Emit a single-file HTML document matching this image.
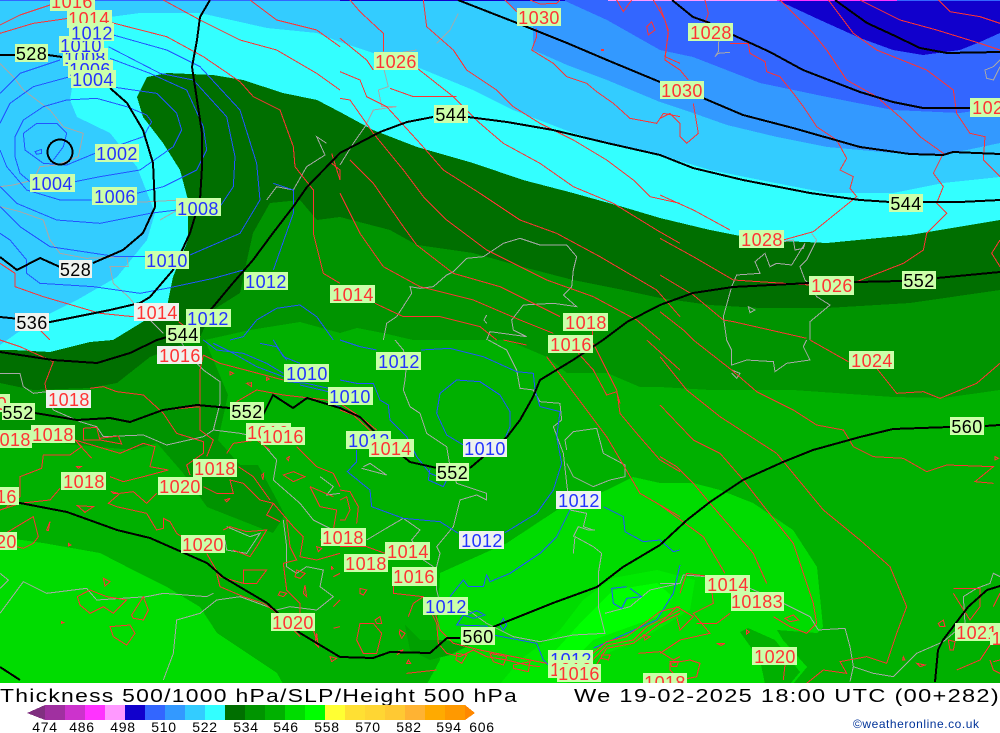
<!DOCTYPE html>
<html><head><meta charset="utf-8"><title>Thickness 500/1000 hPa</title>
<style>
html,body{margin:0;padding:0;background:#fff;width:1000px;height:733px;overflow:hidden}
svg{display:block;font-family:"Liberation Sans",sans-serif}
.l text{font-size:18px;letter-spacing:.4px;text-anchor:middle;shape-rendering:auto}
.r text{fill:#ff3333}.b text{fill:#2233ff}.k text{fill:#000}
.l rect{fill:#ccffaa}
.w rect{fill:#eef2ee}
.red path{fill:none;stroke:#ff3333;stroke-width:1;vector-effect:non-scaling-stroke}
.blu path{fill:none;stroke:#2255ff;stroke-width:1;vector-effect:non-scaling-stroke}
.gry path{fill:none;stroke:#a8a8a8;stroke-width:1;vector-effect:non-scaling-stroke}
.blk path,.blk circle{fill:none;stroke:#000;stroke-width:2;vector-effect:non-scaling-stroke}
</style></head><body>
<svg width="1000" height="733" viewBox="0 0 1000 733" xmlns="http://www.w3.org/2000/svg">
<defs><clipPath id="m"><rect x="0" y="0" width="1000" height="683"/></clipPath></defs>
<g clip-path="url(#m)">
<g shape-rendering="crispEdges">
<rect width="1000" height="684" fill="#1100cc"/>
<path fill="#3366ff" d="M0,0 L777,0 820,20 860,38 893,50 923,55 960,50 980,42 1000,33 V684 H0Z"/>
<path fill="#3399ff" d="M563,0 607,20 660,50 693,57 760,83 827,97 893,110 960,113 1000,107 V684 H0 V0Z"/>
<path fill="#33ccff" d="M0,0 H503 L533,23 533,50 567,65 607,80 660,102 693,113 727,125 777,137 827,147 893,153 943,155 1000,143 V684 H0Z"/>
<path fill="#33ffff" d="M110,17 140,13 200,13 267,28 317,33 340,42 373,53 417,67 473,90 513,110 573,133 623,147 660,155 710,170 760,180 827,193 893,193 943,183 1000,177 V684 H0 V345 L17,333 43,317 77,300 117,277 147,240 155,213 137,167 110,133 77,117 70,100 75,70 90,40Z"/>
<path fill="#006f00" d="M0,350 L13,350 50,352 90,342 113,340 167,307 173,277 188,240 188,200 180,170 163,143 143,117 137,97 147,77 167,73 213,75 243,80 283,93 317,100 340,112 373,130 417,147 473,163 523,180 573,193 623,207 660,218 710,230 760,240 827,243 910,235 1000,220 V684 H0Z"/>
<path fill="#009400" d="M0,383 L33,390 90,388 117,383 150,357 200,337 213,310 240,293 247,260 253,233 270,203 300,200 317,220 340,217 390,230 417,245 473,253 523,267 573,280 623,290 660,298 710,305 760,308 827,308 910,303 1000,290 V684 H0Z"/>
<path fill="#00b000" d="M0,445 L57,443 133,450 157,443 183,473 207,507 273,533 285,515 258,465 240,465 218,440 228,395 205,340 250,330 300,322 340,333 357,328 383,333 413,340 507,340 547,357 567,373 607,373 640,387 660,387 710,390 793,390 893,397 943,398 1000,390 V684 H0Z"/>
<path fill="#00dc00" d="M0,537 L43,543 100,553 133,570 167,587 200,607 217,633 277,673 283,684 H0Z"/>
<path fill="#00dc00" d="M427,684 L440,660 437,633 440,573 507,543 557,510 607,490 633,477 660,483 693,483 720,490 753,503 793,530 817,567 823,627 817,633 777,630 783,640 807,667 793,684Z"/>
<path fill="#00b000" d="M740,632 L748,628 775,640 800,672 790,684 765,684 760,660Z"/>
<path fill="#00ea00" d="M520,660 L560,630 583,600 613,578 657,570 695,580 690,610 640,640 590,660 565,684 500,684Z"/>
<path fill="#00ff00" d="M583,620 L613,590 657,583 673,597 657,617 593,640 573,660 547,660Z"/>
<path fill="#00a000" d="M405,625 L420,640 445,640 470,645 450,655 430,660 410,650Z"/>
<rect x="0" y="0" width="340" height="1" fill="#3366ff"/>
<rect x="340" y="0" width="225" height="1" fill="#1100cc"/>
<rect x="608" y="0" width="170" height="1" fill="#ff99ff"/>
<rect x="777" y="0" width="120" height="1" fill="#ff33ff"/>
<rect x="897" y="0" width="103" height="1" fill="#3366ff"/>
</g>
<g shape-rendering="crispEdges">
<g class="gry" transform="scale(.33333)">
<path d="M0,190 40,230 70,270 110,300 150,330 190,380 250,400 235,470 170,495 120,500 100,540 40,555 0,560"/>
<path d="M0,620 60,635 130,660 150,720 180,760 260,775 380,770 385,800 330,800 340,850 385,890 410,920 450,960 490,1000"/>
<path d="M340,610 450,605 540,600 550,620 480,660"/>
<path d="M800,600 830,560 880,570 920,500 975,465 950,410 980,430"/>
</g>
<g class="gry" transform="translate(340,0) scale(.33333)">
<path d="M290,130 330,90 355,40"/>
<path d="M230,150 170,160 130,200 145,260 115,270 125,320 170,320 100,330 75,380 40,430 0,495"/>
<path d="M130,1020 140,970 170,950 215,880 210,860 240,865 280,860 320,825 340,815 380,775 430,770 490,730 540,715 600,735 680,735 710,770 700,810 695,860 670,885 710,920 640,910 550,915 515,960 520,990 560,1010 450,995 440,1020"/>
<path d="M440,945 432,960 440,970"/>
</g>
<g class="gry" transform="translate(660,0) scale(.33333)">
<path d="M177,110 175,155 165,170 175,160 210,157"/>
<path d="M1020,180 1000,200 975,210 980,235 1000,240 1020,200"/>
<path d="M455,700 470,720 440,780 420,800 435,840 450,855 470,890 510,915 450,965 450,1020"/>
<path d="M370,725 400,720 405,750 430,745 435,730 395,795 350,790 330,800 315,760 285,785 300,820 230,825 215,860 190,950 200,1020"/>
<path d="M265,920 285,930 270,938Z"/>
</g>
<g class="gry" transform="translate(0,340) scale(.33333)">
<path d="M0,100 60,100 70,140 100,160 140,155 160,210 240,245 290,260 310,290 430,285 500,315 610,290 640,270 660,190 660,125 610,90 570,50 540,0"/>
<path d="M640,270 720,280 770,290 830,360 820,420 900,490 940,540 1000,570"/>
<path d="M850,540 860,620 860,680 890,700 920,680 970,690 960,740 1000,770 950,810 870,800 830,810 720,770 650,780 600,820 530,840 520,940 490,1020"/>
<path d="M0,700 25,720 0,745 M0,820 70,725 140,760 260,745 290,780 440,770 490,760 620,770 640,760"/>
<path d="M680,560 750,590 780,580 740,640 680,630 675,600"/>
<path d="M960,410 1000,440 980,465 1020,460"/>
</g>
<g class="gry" transform="translate(340,340) scale(.33333)">
<path d="M165,0 190,30 200,70 195,120 190,150 210,200 240,220 260,280 320,320 330,380 350,430 440,460 440,480 410,465 360,480 340,560 290,620 300,640 285,700 290,750 300,790 370,800 440,850 520,890 600,905 700,885 795,880 775,800 775,700 785,640 760,620 705,590 700,640"/>
<path d="M445,0 500,30 530,90 540,145 580,150 600,185 660,190 665,240 640,260 670,340 680,430 690,510 740,520 730,560 760,570"/>
<path d="M680,330 675,300 700,275 770,265 790,340 855,375 855,410 810,420 760,440 700,410 680,370"/>
<path d="M70,380 90,370 140,405 65,385"/>
<path d="M80,600 130,570 190,535 240,570 215,600 250,660 280,680"/>
<path d="M700,590 715,560 745,570 765,570"/>
<path d="M795,820 870,800 930,750 1020,730"/>
</g>
<g class="gry" transform="translate(660,340) scale(.33333)">
<path d="M200,0 215,30 215,75 260,60 340,65 345,95 380,70 450,60 430,20 440,0"/>
<path d="M215,90 240,100 230,115 215,100"/>
<path d="M0,730 60,730 70,705 140,710 150,730 270,745 370,790 450,830 475,870 555,865 570,920 580,980 570,1025"/>
<path d="M580,980 640,1000 700,1010 770,940 850,905 915,850 910,770 950,745 990,730 1000,700 1020,710"/>
</g>
<g class="blu" transform="scale(.33333)">
<path d="M105,455 125,448 125,460 110,463Z"/>
<path d="M285,460 200,495 130,490 75,450 70,400 110,370 170,370 200,400 190,440 160,480"/>
<path d="M90,545 60,520 45,470 45,410 70,360 130,320 200,300 290,295 380,320 440,345 455,365 430,410 330,445"/>
<path d="M225,545 300,530 420,510 520,440 545,390 530,340 470,280 400,270 345,262"/>
<path d="M275,600 180,600 80,570 20,500 0,450 M0,370 30,310 100,260 210,230"/>
<path d="M410,580 490,560 590,510 620,450 610,380 560,270 450,220 330,175 M0,280 60,220 180,180"/>
<path d="M660,620 700,560 705,470 680,350 580,240 480,220 325,140"/>
<path d="M570,765 720,700 780,600 770,490 720,330 600,200 500,150 340,105"/>
<path d="M530,630 450,640 300,670 170,660 50,610 0,560"/>
<path d="M435,770 350,770 150,740 60,680 0,620"/>
<path d="M730,810 640,835 500,865 420,880 280,860 120,850 80,820 80,780 30,720 0,700"/>
<path d="M820,810 880,640 880,570 820,550"/>
<path d="M690,1020 730,1010 770,960 830,925 900,915 950,950 1000,1020"/>
</g>
<g class="blu" transform="translate(0,340) scale(.33333)">
<path d="M610,0 650,30 730,40 800,70 850,100 M780,10 830,20 860,60 M820,0 850,50 900,70 M640,10 700,40 770,80 850,110"/>
<path d="M985,145 920,130 860,125 M985,155 900,135"/>
<path d="M1020,200 900,170"/>
</g>
<g class="blu" transform="translate(340,340) scale(.33333)">
<path d="M0,0 60,20 110,30 M243,30 330,25 430,50 530,95 580,100 585,150 600,200 660,215 650,290 665,370 640,450 590,520 495,578"/>
<path d="M370,315 320,285 290,220 300,160 350,120 420,125 480,165 510,215 510,260 495,295"/>
<path d="M0,120 50,130 100,130 120,180 145,195 150,240 200,290 230,350 270,400 320,420 310,440 265,420 270,385"/>
<path d="M50,330 50,365 22,395 90,450 95,500 190,535 300,545 355,580"/>
<path d="M690,510 650,590 600,640 510,700 450,725 440,705 430,740 385,740 370,720 330,770"/>
<path d="M790,500 850,530 855,575 910,605 960,600 1000,635 1020,630"/>
<path d="M380,825 410,812 435,825 400,835 370,825 350,855 440,858 460,885 590,910 610,960 630,980"/>
<path d="M490,835 500,855 490,870 480,855Z"/>
<path d="M1020,675 1000,760 950,840 860,880 760,925"/>
<path d="M860,740 815,745 820,790 845,805 860,775 905,770 870,745"/>
</g>
<g class="red" transform="scale(.33333)">
<path d="M150,15 60,45 0,75"/>
<path d="M205,55 100,70 0,100"/>
<path d="M335,68 500,110 610,170 720,245 760,290 840,330 880,440 885,500 940,570 940,700 970,820 1020,850"/>
<path d="M490,0 600,60 720,120 830,150 950,220 1020,270"/>
<path d="M750,0 830,60 950,90 1020,140"/>
<path d="M995,460 1020,540 1020,510 995,490"/>
<path d="M0,790 45,820 45,860 130,890 300,940 400,950"/>
<path d="M45,940 120,990 150,1020"/>
<path d="M535,965 600,1010"/>
</g>
<g class="red" transform="translate(340,0) scale(.33333)">
<path d="M30,0 60,35 130,100 130,155"/>
<path d="M0,115 80,180 100,210"/>
<path d="M250,0 260,80 340,150 380,210 470,270 520,320 600,370 700,420 800,480 880,540 930,590 1020,610"/>
<path d="M232,205 340,290 420,370 490,430 600,490 700,560 820,610 950,690 1020,730"/>
<path d="M0,215 60,240 80,290 140,320 240,430 310,510 420,580 540,660 650,700 780,770 950,870 1020,950"/>
<path d="M0,295 30,300 100,400 190,510 250,590 320,660 440,750 620,840 760,890 890,960 960,1020"/>
<path d="M30,480 100,550 190,680 230,735 340,820 480,860 660,950"/>
<path d="M0,580 60,700 130,800 240,860 400,900 540,960 640,1000"/>
<path d="M105,910 190,950 300,950 420,980 470,1020"/>
<path d="M150,265 220,290 350,290"/>
<path d="M495,0 530,35 M570,0 600,12 650,10 660,0"/>
<path d="M590,85 590,110 575,150 640,190 680,230 740,250 770,275 820,310 870,355 950,370 970,340 1020,350"/>
<path d="M830,0 850,35 875,0 M925,105 920,80 935,65 945,90Z M785,148h5v3h-5Z"/>
<path d="M940,0 975,60 985,100 975,170 1020,190 M758,990 758,1010"/>
</g>
<g class="red" transform="translate(660,0) scale(.33333)">
<path d="M135,0 145,40 135,70"/>
<path d="M210,130 265,130 270,160 315,185 320,215 360,230 400,280 430,320 470,380 530,420 560,475 540,510 580,530 570,565 590,590 460,695 370,720"/>
<path d="M0,20 25,90 15,180 60,210 85,240"/>
<path d="M100,310 115,400 80,430 60,410 60,370 30,340 0,355"/>
<path d="M360,0 460,100 500,150 560,240 650,290 730,360 780,410 850,460 820,520 850,560 830,610 860,640 800,700 790,750 730,790 590,845"/>
<path d="M505,0 580,100 650,150 800,210 880,270 890,340 930,400 975,410 970,480 1020,530"/>
<path d="M600,0 720,60 830,90 960,130 1020,150"/>
<path d="M835,0 870,35 960,50 1020,70"/>
<path d="M0,585 100,630 210,690"/>
<path d="M0,715 100,770 220,840 450,855"/>
<path d="M0,825 100,885 190,960 220,965 440,1015"/>
<path d="M0,935 70,990 100,1020"/>
<path d="M1020,720 995,760 1020,800"/>
</g>
<g class="red" transform="translate(660,340) scale(.33333)">
<path d="M100,0 215,90 290,155 400,210 470,255 550,270 580,320 640,350 730,355 800,395 860,375 1000,380 945,425 1000,430"/>
<path d="M565,65 450,0 M650,85 710,160 790,155 840,175 950,130 1020,70"/>
<path d="M0,50 80,150 180,230 350,340 490,510 600,600 690,680 740,800 710,880 680,970 620,950 540,965 560,1000 490,990 440,1030"/>
<path d="M0,195 100,300 180,340 250,420 320,510 400,610 460,790 470,850 440,880 390,860 340,830"/>
<path d="M0,350 50,380 100,430 150,490 280,640 320,730"/>
<path d="M0,495 130,590 195,700"/>
<path d="M0,850 50,800 100,830 60,870 50,830 M110,850 170,850 210,820 M0,940 60,900 150,880 100,820 160,790 150,710 80,700 60,760"/>
<path d="M375,835 400,825 415,840 390,845Z M170,910h25l-12,6Z M260,870l8,6 -8,6Z M30,970 60,965 90,960 120,970 110,1010 60,1020 30,990Z"/>
<path d="M880,745 960,745 960,800 930,840 880,760 M835,850 850,840 855,860 840,860Z M865,900 885,905 880,930 870,930Z"/>
<path d="M1000,800 1020,760 M1000,965 1020,960 M990,960 1000,990 1020,1000 M890,990 960,960 1000,900"/>
<path d="M730,950 735,960 728,960Z M770,970 795,975 780,980Z M375,975 370,1020 M1005,350 1015,355 1005,360Z"/>
</g>
<g class="red" transform="translate(340,340) scale(.33333)">
<path d="M760,10 830,150 840,220 890,280 960,360 1020,395"/>
<path d="M620,50 740,210 800,290 900,460 1020,530"/>
<path d="M920,0 1020,90"/>
<path d="M490,0 560,15 M715,40 760,90 800,165 830,155 840,190"/>
<path d="M0,190 60,230 110,270 M0,210 40,225 100,280"/>
<path d="M0,480 20,470 30,510 15,540 0,540 M0,450 30,455 55,500 50,550 M0,620 80,620 135,640"/>
<path d="M60,850 100,850 125,880 110,940 70,940 50,900Z M105,840 120,830 125,850 110,850Z M180,870 195,880 185,895 178,880Z M60,745 80,750 70,765 60,760Z"/>
<path d="M205,830 220,790 250,770 290,850 295,910 320,940 360,950 400,930 440,950 500,960 560,975 600,980 M250,770 160,760 160,690 M280,800 300,870 340,910 420,930 470,940 620,970"/>
<path d="M350,940 380,945 365,970 348,960Z M450,940 500,950 490,975 460,965Z M520,975 570,965 565,995 520,985Z M785,945 810,945 805,960 785,955Z"/>
<path d="M1020,800 960,815 900,860 860,890 800,905 730,965 M1020,810 980,830 920,860 880,900 800,915 740,980 M1020,820 960,850 880,910 800,925 760,990"/>
<path d="M895,940 960,935 1000,960 1020,950 M910,885 930,890 915,900Z M990,965 1015,965 1010,980 995,980Z"/>
<path d="M200,1000 290,990 M170,935 190,930 170,945 M205,960 212,970 200,970Z"/>
</g>
<g class="red" transform="translate(0,340) scale(.33333)">
<path d="M0,0 60,20 160,65 135,130 140,160"/>
<path d="M270,145 310,140 350,155 430,165 490,220 530,280 610,305 610,340 560,375 570,405"/>
<path d="M490,210 600,200 600,270 640,300 620,350"/>
<path d="M610,45 660,70 850,120 M610,45 600,90 600,200"/>
<path d="M710,185 770,150 850,165 980,180 1020,190"/>
<path d="M225,300 360,340 430,310 465,320 450,380 505,390 430,410 370,425 330,410 M225,300 245,320 210,345 130,345 125,385 60,410 60,470 20,500 M225,300 275,355 M250,265 290,262 300,300 250,300Z M300,295 355,288 365,312 300,300"/>
<path d="M180,445 150,480 60,490 0,510"/>
<path d="M470,460 440,490 400,455 360,460 325,490 350,500 440,520 470,570 490,565 490,535 510,545 530,580 545,590"/>
<path d="M0,590 50,560 100,530 115,590 100,610 70,625 50,620"/>
<path d="M230,380 243,380 235,385Z M335,455 355,460 340,460Z M232,497 280,500 255,517Z M140,570 150,545 145,572Z M205,610l8,5 -8,3Z M675,480l15,-5 -10,10Z"/>
<path d="M310,715 330,725 315,738Z M232,770 270,750 320,770 380,780 340,820 310,800 270,820 240,795Z M395,825 430,770 445,810 430,840 400,835Z M330,860 390,855 405,880 380,915 340,890Z M185,845l6,3 -6,2Z"/>
<path d="M610,440 650,460 700,460 690,420 730,430 780,480 820,490 800,525 840,545 M715,380 760,410 810,480 M700,310 680,340 700,310 770,300 810,330"/>
<path d="M670,570 690,560 740,575 800,570 770,620 750,650 700,630 M620,640 660,710 730,730 730,690 800,690 770,730 730,730"/>
<path d="M785,405l6,-5 -2,20Z M850,405 880,395 915,410 880,425Z M860,355l8,-5 -3,12Z M740,130 755,128 755,140Z M690,95 700,100 690,105Z M800,112l8,5 -8,4Z"/>
<path d="M890,320 950,380 1000,400 1020,440 M930,440 1000,470 M930,440 960,500 1010,510 1000,570 960,600 M820,490 880,560 910,590 900,650 950,660 1020,640 M860,540 870,620 890,660 850,670 860,750 900,790 900,840 940,870 950,900 M890,690 915,700 900,715 885,710Z M915,735 920,770 910,760Z M840,755 860,760 850,770 835,765Z M950,620l15,5 -10,10Z M995,680l5,6 -6,2Z"/>
<path d="M650,700 660,740 730,770 790,790 820,810 900,890 M950,880 955,920 945,910Z M990,950 1010,955 995,965Z"/>
<path d="M1000,865 1020,860 M1000,800 1020,780 M1000,710 1020,700"/>
</g>
</g>
<g class="blk" shape-rendering="crispEdges">
<path d="M210,0 200,17 197,40 192,67 197,100 202,133 202,167 200,200 190,233 173,270 150,297 140,303 110,310 50,322 0,317"/>
<path d="M0,55 48,55 62,57"/>
<path d="M110,88 127,103 143,130 153,163 155,207 143,233 123,250 93,263"/>
<path d="M60,267 40,258 17,270 0,257"/>
<circle cx="60" cy="152" r="12.5"/>
<path d="M433,117 407,122 380,132 340,153 307,187 293,207 273,233 253,260 233,283 213,307 190,330 157,340 130,353 97,363 53,360 0,352"/>
<path d="M468,117 507,122 553,130 607,143 660,155 693,168 743,180 810,193 860,200 890,202"/>
<path d="M923,202 960,202 1000,200"/>
<path d="M458,0 517,23 567,43 607,60 660,82"/>
<path d="M703,98 743,115 793,128 860,147 910,154 943,155 953,152 1000,154"/>
<path d="M672,0 693,17 710,23"/><path d="M733,35 770,52 803,70 860,92 893,102 923,108 970,108 1000,104"/>
<path d="M835,0 867,23 893,35 920,48 947,53 1000,52"/>
<path d="M902,281 857,282 810,283 733,287 693,293 660,305 627,322 603,340 573,360 540,380 533,397 520,420 507,437 483,457 470,468"/>
<path d="M937,278 1000,272"/>
<path d="M437,468 410,462 383,440 360,417 340,408 307,398 293,408 273,395 263,415"/>
<path d="M230,408 197,405 163,410 130,422 110,418 77,420 35,413"/>
<path d="M950,427 893,429 860,437 813,450 783,462 743,480 710,502 687,520 660,545 623,567 597,587 553,603 493,627"/>
<path d="M985,426 1000,425"/>
<path d="M460,638 447,638 430,653 390,652 373,658 340,657 300,633 267,603 223,577 207,563 150,538 117,530 67,512 20,503 0,502"/>
<path d="M0,667 20,680"/>
<path d="M1000,586 987,590 968,607 943,640 938,650 935,682"/>
</g>
<g class="l">
<g class="r"><rect x="50" y="-7" width="45" height="18"/><text x="72" y="8">1016</text></g>
<g class="r"><rect x="67" y="10" width="45" height="18"/><text x="89" y="25">1014</text></g>
<g class="b"><rect x="63" y="48" width="45" height="18"/><text x="85" y="64">1008</text></g>
<g class="b"><rect x="68" y="60" width="45" height="18"/><text x="90" y="76">1006</text></g>
<g class="b"><rect x="71" y="70" width="45" height="18"/><text x="93" y="86">1004</text></g>
<g class="b"><rect x="59" y="36" width="45" height="17"/><text x="81" y="52">1010</text></g>
<g class="b"><rect x="69" y="23" width="45" height="18"/><text x="92" y="39.5">1012</text></g>
<g class="k"><rect x="15" y="44" width="33" height="18"/><text x="31.500" y="60">528</text></g>
<g class="b"><rect x="95" y="144" width="44" height="18"/><text x="117" y="160">1002</text></g>
<g class="b"><rect x="30" y="174" width="45" height="18"/><text x="52" y="190">1004</text></g>
<g class="b"><rect x="92" y="187" width="45" height="18"/><text x="115" y="203">1006</text></g>
<g class="b"><rect x="176" y="198" width="45" height="18"/><text x="198" y="215">1008</text></g>
<g class="b"><rect x="145" y="251" width="44" height="18"/><text x="167" y="267">1010</text></g>
<g class="k w"><rect x="59" y="260" width="33" height="18"/><text x="75.500" y="276">528</text></g>
<g class="b"><rect x="244" y="272" width="44" height="18"/><text x="266" y="288">1012</text></g>
<g class="r w"><rect x="134" y="303" width="45" height="18"/><text x="157" y="319">1014</text></g>
<g class="k w"><rect x="15" y="313" width="34" height="18"/><text x="32" y="329">536</text></g>
<g class="k"><rect x="166" y="325" width="34" height="18"/><text x="183" y="341">544</text></g>
<g class="b"><rect x="186" y="309" width="45" height="18"/><text x="208" y="325">1012</text></g>
<g class="r w"><rect x="157" y="346" width="45" height="18"/><text x="180" y="362">1016</text></g>
<g class="r w"><rect x="46" y="390" width="45" height="18"/><text x="69" y="406">1018</text></g>
<g class="r"><rect x="-10" y="394" width="20" height="18"/><text x="2" y="410">0</text></g>
<g class="k"><rect x="2" y="403" width="33" height="17"/><text x="18" y="419">552</text></g>
<g class="r"><rect x="-13" y="430" width="45" height="18"/><text x="10" y="446">1018</text></g>
<g class="r"><rect x="31" y="425" width="44" height="18"/><text x="53" y="441">1018</text></g>
<g class="r"><rect x="61" y="472" width="45" height="18"/><text x="84" y="488">1018</text></g>
<g class="r"><rect x="-26" y="487" width="45" height="18"/><text x="-4" y="503">1016</text></g>
<g class="r"><rect x="-25" y="532" width="42" height="18"/><text x="-4" y="548">1020</text></g>
<g class="k"><rect x="230" y="402" width="34" height="18"/><text x="247" y="418">552</text></g>
<g class="r"><rect x="246" y="423" width="45" height="18"/><text x="268" y="439">1016</text></g>
<g class="r"><rect x="261" y="427" width="44" height="18"/><text x="283" y="443">1016</text></g>
<g class="r"><rect x="193" y="459" width="44" height="18"/><text x="215" y="475">1018</text></g>
<g class="r"><rect x="158" y="477" width="44" height="18"/><text x="180" y="493">1020</text></g>
<g class="r"><rect x="181" y="535" width="44" height="18"/><text x="203" y="551">1020</text></g>
<g class="b"><rect x="284" y="364" width="45" height="18"/><text x="307" y="380">1010</text></g>
<g class="b"><rect x="328" y="387" width="45" height="18"/><text x="350" y="403">1010</text></g>
<g class="r"><rect x="271" y="613" width="44" height="18"/><text x="293" y="629">1020</text></g>
<g class="b"><rect x="376" y="352" width="45" height="18"/><text x="399" y="368">1012</text></g>
<g class="b w"><rect x="463" y="439" width="44" height="18"/><text x="485" y="455">1010</text></g>
<g class="b"><rect x="346" y="431" width="45" height="18"/><text x="369" y="447">1012</text></g>
<g class="r"><rect x="369" y="439" width="45" height="18"/><text x="391" y="455">1014</text></g>
<g class="k"><rect x="436" y="463" width="33" height="18"/><text x="452.500" y="479">552</text></g>
<g class="b w"><rect x="556" y="491" width="45" height="18"/><text x="579" y="507">1012</text></g>
<g class="b w"><rect x="459" y="531" width="45" height="18"/><text x="482" y="547">1012</text></g>
<g class="r"><rect x="321" y="528" width="45" height="18"/><text x="343" y="544">1018</text></g>
<g class="r"><rect x="385" y="542" width="45" height="18"/><text x="408" y="558">1014</text></g>
<g class="r"><rect x="344" y="554" width="44" height="18"/><text x="366" y="570">1018</text></g>
<g class="r"><rect x="392" y="567" width="45" height="19"/><text x="414" y="583">1016</text></g>
<g class="b"><rect x="423" y="597" width="45" height="18"/><text x="446" y="613">1012</text></g>
<g class="k"><rect x="461" y="627" width="34" height="18"/><text x="478" y="643">560</text></g>
<g class="r"><rect x="563" y="313" width="45" height="18"/><text x="586" y="329">1018</text></g>
<g class="r"><rect x="548" y="335" width="45" height="18"/><text x="571" y="351">1016</text></g>
<g class="r"><rect x="330" y="285" width="45" height="18"/><text x="353" y="301">1014</text></g>
<g class="r"><rect x="374" y="52" width="44" height="18"/><text x="396" y="68">1026</text></g>
<g class="k"><rect x="434" y="105" width="34" height="18"/><text x="451" y="121">544</text></g>
<g class="r"><rect x="517" y="8" width="44" height="18"/><text x="539" y="24">1030</text></g>
<g class="r"><rect x="660" y="81" width="44" height="18"/><text x="682" y="97">1030</text></g>
<g class="r"><rect x="688" y="23" width="45" height="18"/><text x="711" y="39">1028</text></g>
<g class="r"><rect x="970" y="98" width="45" height="19"/><text x="993" y="114">1028</text></g>
<g class="k"><rect x="889" y="194" width="34" height="18"/><text x="906" y="210">544</text></g>
<g class="r"><rect x="739" y="230" width="45" height="18"/><text x="762" y="246">1028</text></g>
<g class="r"><rect x="809" y="276" width="45" height="19"/><text x="832" y="292">1026</text></g>
<g class="k"><rect x="902" y="271" width="34" height="18"/><text x="919" y="287">552</text></g>
<g class="r"><rect x="849" y="351" width="45" height="18"/><text x="872" y="367">1024</text></g>
<g class="k"><rect x="950" y="417" width="34" height="18"/><text x="967" y="433">560</text></g>
<g class="r"><rect x="705" y="575" width="45" height="18"/><text x="728" y="591">1014</text></g>
<g class="r"><rect x="731" y="592" width="53" height="19"/><text x="757" y="608">10183</text></g>
<g class="r"><rect x="752" y="647" width="45" height="18"/><text x="775" y="663">1020</text></g>
<g class="b"><rect x="548" y="650" width="45" height="18"/><text x="571" y="666">1012</text></g>
<g class="r"><rect x="548" y="660" width="45" height="18"/><text x="571" y="676">1016</text></g>
<g class="r"><rect x="557" y="664" width="44" height="18"/><text x="579" y="680">1016</text></g>
<g class="r"><rect x="643" y="673" width="44" height="18"/><text x="665" y="689">1018</text></g>
<g class="r"><rect x="955" y="623" width="45" height="18"/><text x="977" y="639">1021</text></g>
<g class="r"><rect x="990" y="632" width="12" height="13"/><text x="997" y="645">1</text></g>
</g>
</g>
<text x="0" y="702" font-size="18" letter-spacing="1" textLength="518" lengthAdjust="spacingAndGlyphs" fill="#000">Thickness 500/1000 hPa/SLP/Height 500 hPa</text>
<text x="574" y="702" font-size="18" letter-spacing="1" textLength="426" lengthAdjust="spacingAndGlyphs" fill="#000">We 19-02-2025 18:00 UTC (00+282)</text>
<g shape-rendering="crispEdges">
<path fill="#803080" d="M27,713 45,705 V720Z"/>
<rect x="45" y="705" width="20" height="15" fill="#a030a0"/>
<rect x="65" y="705" width="20" height="15" fill="#cc33cc"/>
<rect x="85" y="705" width="20" height="15" fill="#ff33ff"/>
<rect x="105" y="705" width="20" height="15" fill="#ff99ff"/>
<rect x="125" y="705" width="20" height="15" fill="#1100cc"/>
<rect x="145" y="705" width="20" height="15" fill="#3366ff"/>
<rect x="165" y="705" width="20" height="15" fill="#3399ff"/>
<rect x="185" y="705" width="20" height="15" fill="#33ccff"/>
<rect x="205" y="705" width="20" height="15" fill="#33ffff"/>
<rect x="225" y="705" width="20" height="15" fill="#006f00"/>
<rect x="245" y="705" width="20" height="15" fill="#009400"/>
<rect x="265" y="705" width="20" height="15" fill="#00b000"/>
<rect x="285" y="705" width="20" height="15" fill="#00dc00"/>
<rect x="305" y="705" width="20" height="15" fill="#00ff00"/>
<rect x="325" y="705" width="20" height="15" fill="#ffff33"/>
<rect x="345" y="705" width="20" height="15" fill="#ffe033"/>
<rect x="365" y="705" width="20" height="15" fill="#ffd633"/>
<rect x="385" y="705" width="20" height="15" fill="#ffc933"/>
<rect x="405" y="705" width="20" height="15" fill="#ffb333"/>
<rect x="425" y="705" width="20" height="15" fill="#ffaa00"/>
<rect x="445" y="705" width="20" height="15" fill="#ff9900"/>
<path fill="#ff8800" d="M465,705 475,713 465,720Z"/>
</g>
<g font-size="14" fill="#000" text-anchor="middle" letter-spacing=".7">
<text x="45" y="732">474</text><text x="82" y="732">486</text><text x="123" y="732">498</text><text x="164" y="732">510</text><text x="205" y="732">522</text><text x="246" y="732">534</text><text x="286" y="732">546</text><text x="327" y="732">558</text><text x="368" y="732">570</text><text x="409" y="732">582</text><text x="449" y="732">594</text><text x="482" y="732">606</text>
</g>
<text x="853" y="728" font-size="12" textLength="126" lengthAdjust="spacing" fill="#003399">©weatheronline.co.uk</text>
</svg>
</body></html>
